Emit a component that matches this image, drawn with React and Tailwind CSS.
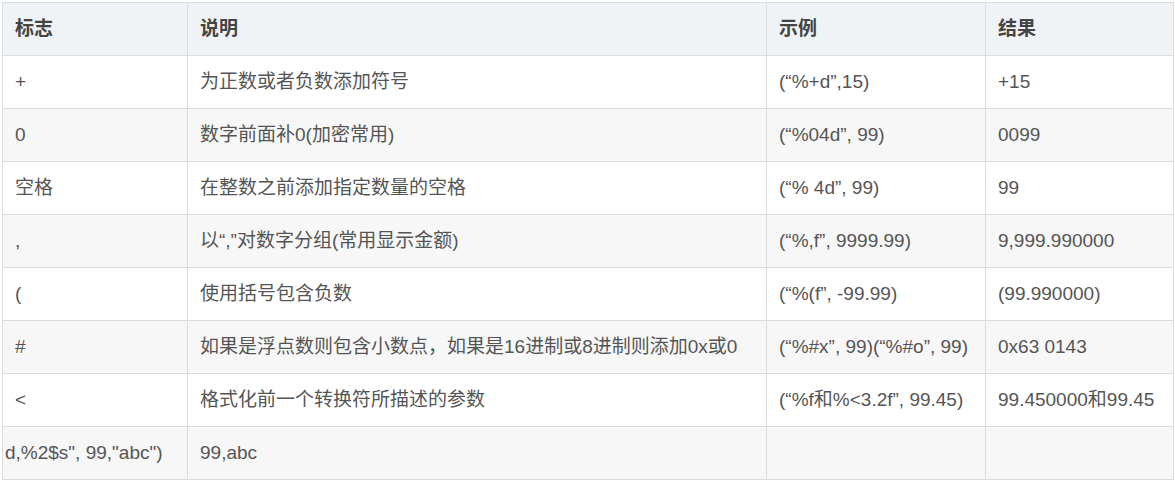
import React from "react";

const rows = [
  ["+", "为正数或者负数添加符号", "(“%+d”,15)", "+15"],
  ["0", "数字前面补0(加密常用)", "(“%04d”, 99)", "0099"],
  ["空格", "在整数之前添加指定数量的空格", "(“% 4d”, 99)", "99"],
  [",", "以“,”对数字分组(常用显示金额)", "(“%,f”, 9999.99)", "9,999.990000"],
  ["(", "使用括号包含负数", "(“%(f”, -99.99)", "(99.990000)"],
  ["#", "如果是浮点数则包含小数点，如果是16进制或8进制则添加0x或0", "(“%#x”, 99)(“%#o”, 99)", "0x63 0143"],
  ["<", "格式化前一个转换符所描述的参数", "(“%f和%<3.2f”, 99.45)", "99.450000和99.45"],
  ["d,%2$s\", 99,\"abc\")", "99,abc", "", ""],
];

export default function App() {
  return (
    <div className="bg-white w-[1175px] h-[483px] pt-[2px] pl-[2px]" style={{ fontFamily: '"Liberation Sans", "Noto Sans CJK SC", sans-serif' }}>
      <table className="table-fixed border-collapse w-[1171px] text-[19px] text-[#555]">
        <colgroup>
          <col className="w-[185px]" />
          <col className="w-[579px]" />
          <col className="w-[219px]" />
          <col className="w-[188px]" />
        </colgroup>
        <thead>
          <tr className="h-[53px] bg-[#eff3f5]">
            {["标志", "说明", "示例", "结果"].map((h) => (
              <th key={h} className="border border-[#dcdcdc] text-left font-bold text-[#444] pl-[12px] align-middle">
                {h}
              </th>
            ))}
          </tr>
        </thead>
        <tbody>
          {rows.map((r, i) => (
            <tr key={i} className={i % 2 === 1 ? "h-[53px] bg-[#f7f7f7]" : "h-[53px] bg-white"}>
              {r.map((c, j) => (
                <td
                  key={j}
                  className={
                    i === 7 && j === 0
                      ? "border border-[#dcdcdc] pl-[2px] whitespace-nowrap overflow-hidden align-middle"
                      : "border border-[#dcdcdc] pl-[12px] whitespace-nowrap align-middle"
                  }
                >
                  {c}
                </td>
              ))}
            </tr>
          ))}
        </tbody>
      </table>
    </div>
  );
}
